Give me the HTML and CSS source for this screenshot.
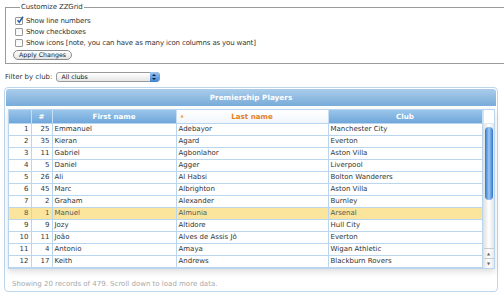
FILE: index.html
```html
<!DOCTYPE html>
<html>
<head>
    <title>ZZGrid - Premiership Players</title>
    <link rel="stylesheet" href="styles.css">
</head>
<body>
    <fieldset class="customize">
        <legend>Customize ZZGrid</legend>
        <label class="opt"><span class="box checked"><svg width="8" height="8" viewBox="0 0 8 8"><path d="M1.5 4.2 L3.3 6.3 L7 0.8" fill="none" stroke="#2a5fa8" stroke-width="1.6"/></svg></span>Show line numbers</label>
        <label class="opt"><span class="box"></span>Show checkboxes</label>
        <label class="opt"><span class="box"></span>Show icons [note, you can have as many icon columns as you want]</label>
        <button type="button" class="apply">Apply Changes</button>
    </fieldset>

    <div class="filter">
        <span>Filter by club:</span>
        <div class="select">All clubs<span class="stepper"><i class="up"></i><i class="down"></i></span></div>
    </div>

    <div class="zzgrid">
        <div class="title">Premiership Players</div>
        <div class="view">
            <table class="rows">
                <colgroup>
                    <col style="width:22px"><col style="width:21px"><col style="width:124px"><col style="width:152px"><col style="width:154px">
                </colgroup>
                <thead>
                    <tr>
                        <th></th>
                        <th>#</th>
                        <th>First name</th>
                        <th class="sorted"><span class="arrow">&#9650;</span>Last name</th>
                        <th>Club</th>
                    </tr>
                </thead>
                <tbody id="rows"></tbody>
            </table>
            <div class="scroll">
                <div class="corner"></div>
                <div class="track"><div class="thumb"></div></div>
                <div class="btn">&#9650;</div>
                <div class="btn">&#9660;</div>
            </div>
        </div>
        <div class="status">Showing 20 records of 479. Scroll down to load more data.</div>
    </div>

    <script>
        const players = [
            [25, 'Emmanuel', 'Adebayor', 'Manchester City'],
            [35, 'Kieran', 'Agard', 'Everton'],
            [11, 'Gabriel', 'Agbonlahor', 'Aston Villa'],
            [5, 'Daniel', 'Agger', 'Liverpool'],
            [26, 'Ali', 'Al Habsi', 'Bolton Wanderers'],
            [45, 'Marc', 'Albrighton', 'Aston Villa'],
            [2, 'Graham', 'Alexander', 'Burnley'],
            [1, 'Manuel', 'Almunia', 'Arsenal'],
            [9, 'Jozy', 'Altidore', 'Hull City'],
            [11, 'João', 'Alves de Assis Jô', 'Everton'],
            [4, 'Antonio', 'Amaya', 'Wigan Athletic'],
            [17, 'Keith', 'Andrews', 'Blackburn Rovers']
        ];

        const tbody = document.getElementById('rows');
        players.forEach(function (p, i) {
            const tr = document.createElement('tr');
            if (i === 7) tr.className = 'selected'; // highlighted row
            tr.innerHTML = '<td class="num">' + (i + 1) + '</td><td class="num">' + p[0] + '</td><td>' + p[1] + '</td><td>' + p[2] + '</td><td>' + p[3] + '</td>';
            tbody.appendChild(tr);
        });
    </script>
</body>
</html>
```

FILE: styles.css
```css
body {
    font-family: "DejaVu Sans", Verdana, sans-serif;
    font-size: 7px;
    color: #333;
    margin: 0;
    padding: 0 0 0 5px;
    overflow: hidden;
    background-color: #fff;
}
.customize {
    width: 520px;
    height: 61px;
    box-sizing: border-box;
    margin: 3px 0 0 0;
    padding: 3px 9px 0 9px;
    border: 1px solid #9a9a9a;
}
.customize legend {
    padding: 0 1px;
    margin-left: 5px;
    line-height: 9px;
    font-size: 7px;
    letter-spacing: -0.1px;
    color: #333;
}
.opt {
    display: flex;
    align-items: center;
    height: 11px;
    gap: 3px;
    font-size: 7px;
    letter-spacing: -0.15px;
    color: #333;
}
.box {
    width: 6px;
    height: 6px;
    border: 1px solid #999;
    border-radius: 1px;
    background: linear-gradient(#f4f4f4, #fff);
    position: relative;
}
.box svg {
    position: absolute;
    left: 0;
    top: -2px;
}
.apply {
    display: block;
    margin: 2px 0 0 -2px;
    height: 10px;
    width: 59px;
    padding: 0;
    border: 1px solid #8c8c8c;
    border-radius: 5px;
    background: linear-gradient(#ffffff, #e2e2e2);
    font-family: "DejaVu Sans", Verdana, sans-serif;
    font-size: 6.3px;
    color: #222;
    line-height: 8px;
}
.filter {
    display: flex;
    align-items: center;
    gap: 4px;
    margin-top: 8px;
    height: 10px;
}
.select {
    position: relative;
    width: 104px;
    height: 10px;
    box-sizing: border-box;
    border: 1px solid #9a9a9a;
    border-radius: 3px;
    background: linear-gradient(#ffffff, #e6e6e6);
    padding-left: 4px;
    font-size: 6.3px;
    line-height: 8px;
    color: #111;
}
.stepper {
    position: absolute;
    right: 0;
    top: -1px;
    width: 9px;
    height: 10px;
    border-radius: 0 3px 3px 0;
    background: linear-gradient(#9cc6f0, #3d82d8);
}
.stepper i {
    position: absolute;
    left: 2px;
    width: 0;
    height: 0;
    border-left: 2px solid transparent;
    border-right: 2px solid transparent;
}
.stepper .up {
    top: 2px;
    border-bottom: 2px solid #123;
}
.stepper .down {
    top: 6px;
    border-top: 2px solid #123;
}
.zzgrid {
    width: 494px;
    box-sizing: border-box;
    margin: 5px 0 0 -1px;
    padding: 1px;
    border: 1px solid #bcd6ee;
    border-radius: 4px;
    height: 205px;
}
.title {
    height: 17px;
    line-height: 17px;
    border-radius: 3px 3px 0 0;
    background: linear-gradient(#aacdeb, #78abd9);
    color: #fff;
    font-weight: bold;
    font-size: 7.3px;
    text-align: center;
}
.view {
    display: flex;
    width: 485px;
    margin: 3px 0 0 2px;
    border: 1px solid #b9d4ee;
    box-shadow: 0 3px 6px rgba(0, 0, 0, 0.13);
}
.rows {
    width: 473px;
    border-collapse: collapse;
    table-layout: fixed;
}
.rows th {
    height: 13px;
    padding: 0;
    background: linear-gradient(#9ac5ea, #6fa7da);
    color: #fff;
    font-weight: bold;
    font-size: 7.1px;
    text-align: center;
    border-right: 1px solid #c8def2;
    border-bottom: 1px solid #b9d4ee;
}
.rows th.sorted {
    position: relative;
    background: linear-gradient(#ffffff, #f1f6fb);
    color: #e5801f;
}
.rows th .arrow {
    position: absolute;
    left: 4px;
    top: 3px;
    font-size: 4px;
    color: #f0a040;
}
.rows td {
    height: 11px;
    padding: 0 2px;
    line-height: 11px;
    white-space: nowrap;
    overflow: hidden;
    border-right: 1px solid #bad5ee;
    border-bottom: 1px solid #bad5ee;
}
.rows td.num {
    text-align: right;
}
.rows tr.selected td {
    background-color: #fbe59c;
    color: #555;
}
.scroll {
    width: 10px;
    display: flex;
    flex-direction: column;
    border-left: 1px solid #d6e4f1;
}
.corner {
    height: 13px;
    border-bottom: 1px solid #e0eaf4;
}
.track {
    flex: 1;
    background: linear-gradient(90deg, #e4e4e4, #ffffff 50%, #e4e4e4);
}
.thumb {
    margin: 3px 1px 0 1px;
    height: 73px;
    border-radius: 4px;
    background: linear-gradient(90deg, #2f74c8, #9ccaf4 50%, #2f74c8);
}
.btn {
    height: 9px;
    line-height: 9px;
    font-size: 4px;
    color: #666;
    text-align: center;
    background: linear-gradient(90deg, #e8e8e8, #fff 50%, #e8e8e8);
    border-top: 1px solid #ccc;
}
.status {
    margin: 11px 0 0 6px;
    color: #a8a8a8;
    font-size: 7px;
}
```
